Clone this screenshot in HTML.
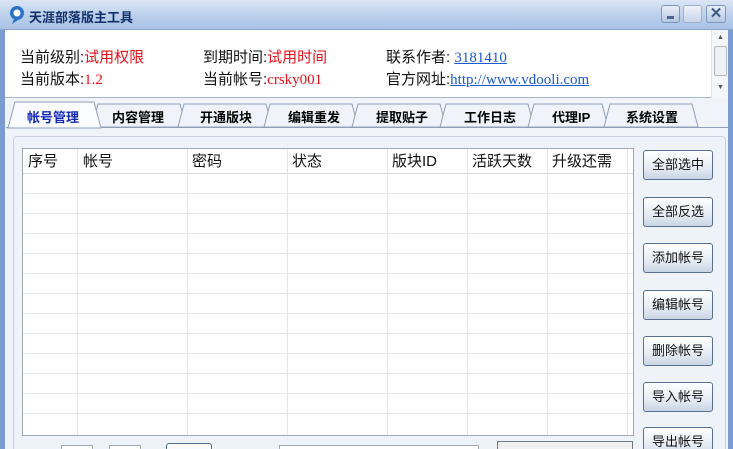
<!DOCTYPE html>
<html style="width:733px;height:449px;overflow:hidden"><head><meta charset="utf-8"><style>
*{margin:0;padding:0;box-sizing:border-box}
body{width:733px;height:449px;overflow:hidden;background:#f0f4fa;font-family:"Liberation Sans","Noto Sans CJK SC",sans-serif;position:relative}
.abs{position:absolute}
.title{left:0;top:0;width:733px;height:30px;background:linear-gradient(#dbe6f6,#b8cdea 60%,#aac2e6);border-bottom:1px solid #8aa6d0}
.info{left:5px;top:30px;width:723px;height:68px;background:#fff;border-bottom:1px solid #a8b8cc}
.t{font-size:15px;color:#111;white-space:nowrap}
.r{color:#e8101a;font-family:"Liberation Serif","Noto Sans CJK SC",serif}
.l{color:#1a5ad0;text-decoration:underline;font-family:"Liberation Serif",serif}
.sb{left:711px;top:30px;width:17px;height:68px;background:#f4f6f9;border-left:1px solid #e0e4ea}
.grid{left:22px;top:148px;width:612px;height:288px;background:#fff;border:1px solid #a0a8b4}
.btn{width:70px;height:30px;left:643px;border:1px solid #5a7090;border-radius:3px;background:linear-gradient(#fff,#e6ecf4 60%,#c8d4e4);font-size:13px;text-align:center;line-height:28px;color:#111}
.hd{font-size:15px;color:#111;top:150px}
.tab{top:107px;font-size:13px;font-weight:bold}
</style></head><body>
<div class="abs title"></div>
<svg class="abs" style="left:8px;top:5px" width="18" height="20"><circle cx="9" cy="8" r="7" fill="#2a72c8"/><circle cx="9" cy="8" r="3.5" fill="#fff"/><path d="M6 14 L4 19 L10 15Z" fill="#2a72c8"/></svg>
<div class="abs" style="left:29px;top:7px;font-size:13px;font-weight:bold;color:#10306a">天涯部落版主工具</div>
<div class="abs" style="left:661px;top:5px;width:19px;height:18px;border:1px solid #7c96bc;border-radius:3px;background:linear-gradient(#e8eef8,#b4c6e2)"><div style="position:absolute;left:5px;top:10px;width:7px;height:3px;background:#4c6690"></div></div>
<div class="abs" style="left:683px;top:5px;width:19px;height:18px;border:1px solid #9eb0cc;border-radius:3px;background:linear-gradient(#eef2fa,#c8d4ea)"></div>
<div class="abs" style="left:706px;top:5px;width:20px;height:18px;border:1px solid #7c96bc;border-radius:3px;background:linear-gradient(#e8eef8,#b4c6e2);color:#3c5a88;font-size:15px;font-weight:bold;text-align:center;line-height:16px">✕</div>
<div class="abs info"></div>
<div class="abs sb"><div style="position:absolute;left:2px;top:16px;width:13px;height:30px;border:1px solid #b0b8c4;border-radius:2px;background:#eef0f4"></div><div style="position:absolute;left:5px;top:4px;font-size:7px;color:#555">▲</div><div style="position:absolute;left:5px;top:54px;font-size:7px;color:#555">▼</div></div>
<div class="abs t" style="left:20px;top:46px">当前级别:<span class="r" style="font-family:'Liberation Sans','Noto Sans CJK SC',sans-serif">试用权限</span></div>
<div class="abs t" style="left:20px;top:68px">当前版本:<span class="r">1.2</span></div>
<div class="abs t" style="left:203px;top:46px">到期时间:<span class="r" style="font-family:'Liberation Sans','Noto Sans CJK SC',sans-serif">试用时间</span></div>
<div class="abs t" style="left:203px;top:68px">当前帐号:<span class="r">crsky001</span></div>
<div class="abs t" style="left:386px;top:46px">联系作者: <span class="l">3181410</span></div>
<div class="abs t" style="left:386px;top:68px">官方网址:<span class="l">http://www.vdooli.com</span></div>
<svg class="abs" style="left:0;top:98px" width="733" height="32">
<g stroke="#90a0b8" fill="#f0f4fa">
<polygon points="92,29 98,6 180,6 186,29"/><polygon points="178,29 184,6 266,6 272,29"/><polygon points="264,29 270,6 352,6 358,29"/><polygon points="352,29 358,6 440,6 446,29"/><polygon points="440,29 446,6 528,6 534,29"/><polygon points="528,29 534,6 602,6 608,29"/><polygon points="604,29 610,6 692,6 698,29"/>
<polygon points="8,30 15,4 94,4 101,30" fill="#fafcff"/>
</g>
<line x1="6" y1="29.5" x2="8" y2="29.5" stroke="#90a0b8"/>
<line x1="101" y1="29.5" x2="728" y2="29.5" stroke="#90a0b8"/>
</svg>
<div class="abs tab" style="left:27px;color:#1428b8">帐号管理</div>
<div class="abs tab" style="left:112px">内容管理</div>
<div class="abs tab" style="left:200px">开通版块</div>
<div class="abs tab" style="left:288px">编辑重发</div>
<div class="abs tab" style="left:376px">提取贴子</div>
<div class="abs tab" style="left:464px">工作日志</div>
<div class="abs tab" style="left:552px">代理IP</div>
<div class="abs tab" style="left:626px">系统设置</div>
<div class="abs" style="left:13px;top:136px;width:713px;height:330px;border:1px solid #c8d2de;border-radius:4px;background:#eef3fa"></div>
<div class="abs grid"></div>
<svg class="abs" style="left:23px;top:149px" width="610" height="286">
<g stroke="#e4e6ea"><line x1="0" y1="24.5" x2="610" y2="24.5" stroke="#d4d6da"/>
<line x1="0" y1="44.5" x2="610" y2="44.5"/><line x1="0" y1="64.5" x2="610" y2="64.5"/><line x1="0" y1="84.5" x2="610" y2="84.5"/><line x1="0" y1="104.5" x2="610" y2="104.5"/><line x1="0" y1="124.5" x2="610" y2="124.5"/><line x1="0" y1="144.5" x2="610" y2="144.5"/><line x1="0" y1="164.5" x2="610" y2="164.5"/><line x1="0" y1="184.5" x2="610" y2="184.5"/><line x1="0" y1="204.5" x2="610" y2="204.5"/><line x1="0" y1="224.5" x2="610" y2="224.5"/><line x1="0" y1="244.5" x2="610" y2="244.5"/><line x1="0" y1="264.5" x2="610" y2="264.5"/>
<line x1="54.5" y1="0" x2="54.5" y2="286"/><line x1="164.5" y1="0" x2="164.5" y2="286"/><line x1="264.5" y1="0" x2="264.5" y2="286"/><line x1="364.5" y1="0" x2="364.5" y2="286"/><line x1="444.5" y1="0" x2="444.5" y2="286"/><line x1="524.5" y1="0" x2="524.5" y2="286"/><line x1="604.5" y1="0" x2="604.5" y2="286"/></g>
</svg>
<div class="abs hd" style="left:28px">序号</div>
<div class="abs hd" style="left:83px">帐号</div>
<div class="abs hd" style="left:192px">密码</div>
<div class="abs hd" style="left:292px">状态</div>
<div class="abs hd" style="left:392px">版块ID</div>
<div class="abs hd" style="left:472px">活跃天数</div>
<div class="abs hd" style="left:552px">升级还需</div>
<div class="abs btn" style="top:150px">全部选中</div>
<div class="abs btn" style="top:197px">全部反选</div>
<div class="abs btn" style="top:243px">添加帐号</div>
<div class="abs btn" style="top:290px">编辑帐号</div>
<div class="abs btn" style="top:336px">删除帐号</div>
<div class="abs btn" style="top:382px">导入帐号</div>
<div class="abs btn" style="top:427px">导出帐号</div>
<div class="abs" style="left:61px;top:445px;width:32px;height:10px;border:1px solid #a0a8b4;background:#fff"></div>
<div class="abs" style="left:109px;top:445px;width:32px;height:10px;border:1px solid #a0a8b4;background:#fff"></div>
<div class="abs" style="left:166px;top:443px;width:46px;height:10px;border:1px solid #506a8c;border-radius:3px;background:#f8fafc"></div>
<div class="abs" style="left:279px;top:445px;width:200px;height:10px;border:1px solid #a0a8b4;background:#fff"></div>
<div class="abs" style="left:497px;top:441px;width:136px;height:12px;border:1px solid #707880;background:#f0f0f0"></div>
<div class="abs" style="left:0;top:30px;width:5px;height:419px;background:#7a9cd0"></div>
<div class="abs" style="left:728px;top:30px;width:5px;height:419px;background:#7a9cd0"></div>
</body></html>
